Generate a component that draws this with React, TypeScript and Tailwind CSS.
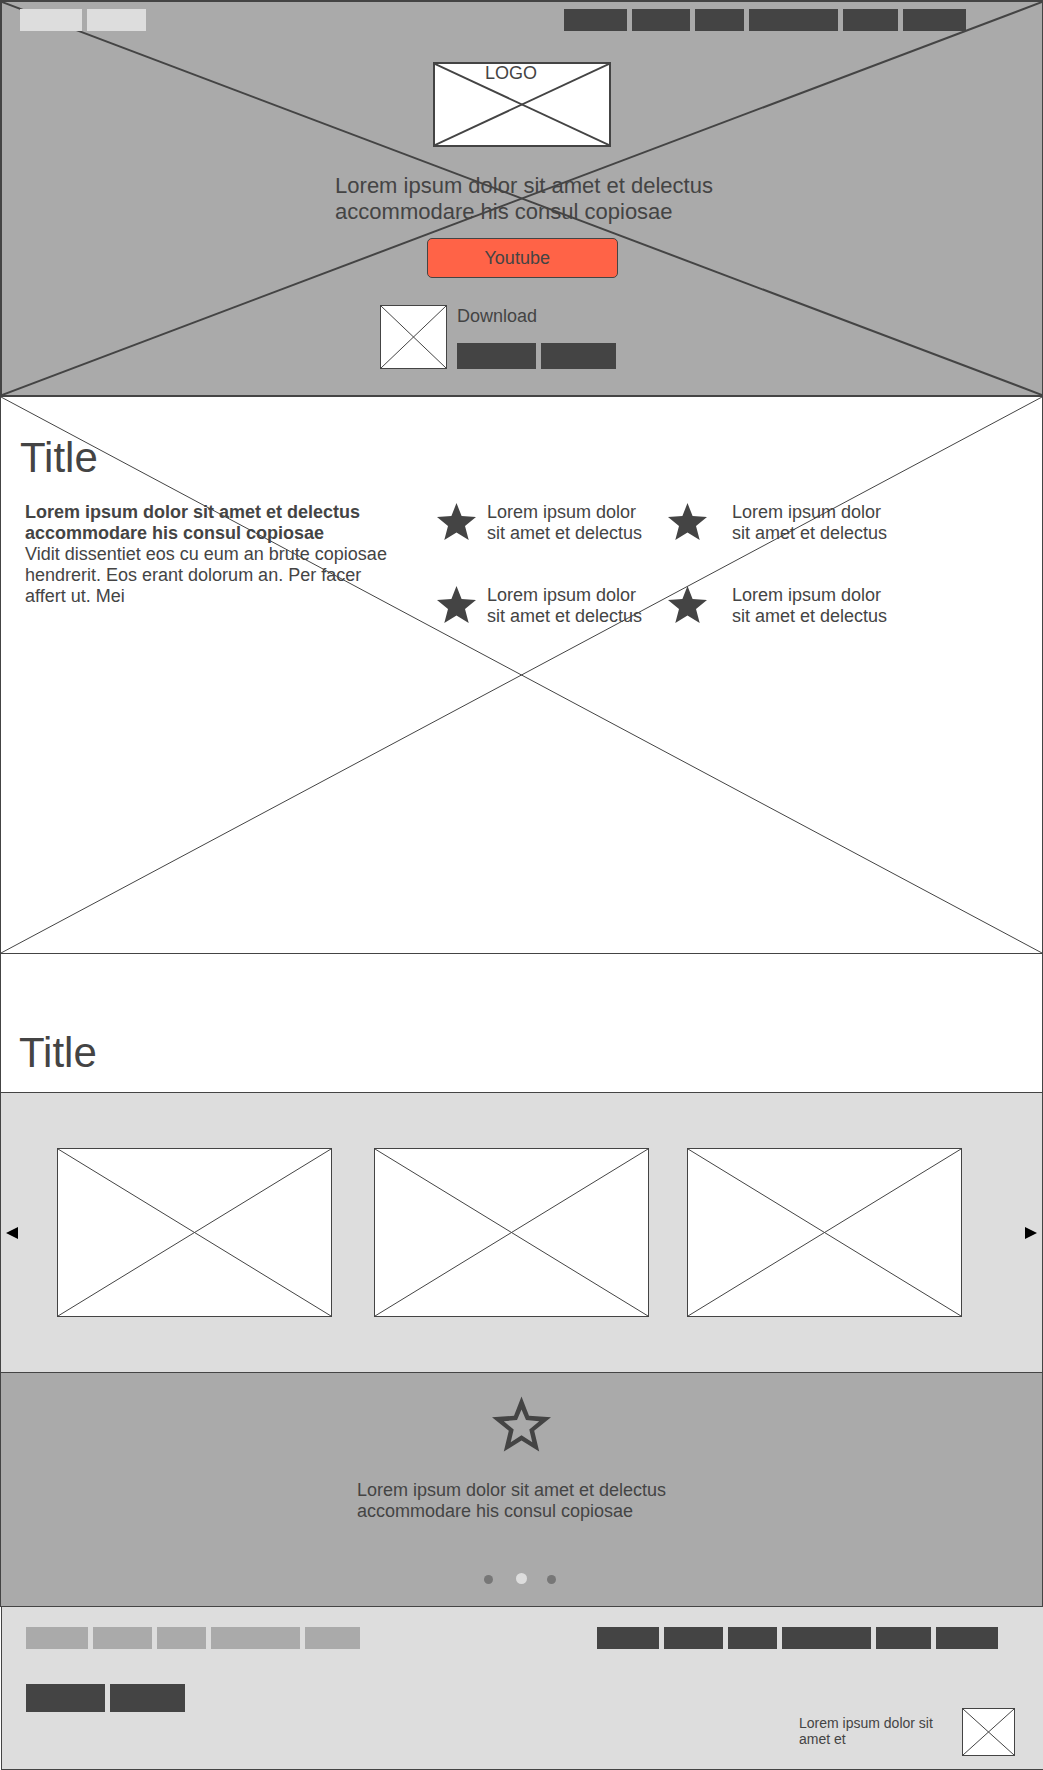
import React from "react";
import { clsx } from "clsx";

function Cross({ stroke = 1 }: { stroke?: number }) {
  return (
    <svg
      aria-hidden="true"
      className="pointer-events-none absolute inset-0 h-full w-full text-[#444]"
    >
      <line x1="0" y1="0" x2="100%" y2="100%" stroke="currentColor" strokeWidth={stroke} />
      <line x1="0" y1="100%" x2="100%" y2="0" stroke="currentColor" strokeWidth={stroke} />
    </svg>
  );
}

function Picture({ className }: { className: string }) {
  return (
    <div
      role="img"
      aria-label="Image placeholder"
      className={clsx("relative border border-[#444] bg-white", className)}
    >
      <Cross />
    </div>
  );
}

function Bars({ label, widths, tone }: { label: string; widths: string[]; tone: string }) {
  return (
    <nav aria-label={label} className="flex gap-[5px]">
      {widths.map((width, i) => (
        <a
          key={i}
          href="#"
          aria-label={`${label} ${i + 1}`}
          className={clsx("block", width, tone)}
        />
      ))}
    </nav>
  );
}

const LIGHT = "h-[22px] bg-[#ddd]";
const MID = "h-[22px] bg-[#aaa]";
const DARK = "h-[22px] bg-[#444]";

function Star() {
  return (
    <svg aria-hidden="true" viewBox="0 0 39 37" className="mt-px h-[37px] w-[39px] shrink-0">
      <polygon
        fill="#444"
        points="19.5,0 24.6,13.1 39,14 28,23 31.7,37 19.5,29.6 7.3,37 11,23 0,14 14.4,13.1"
      />
    </svg>
  );
}

function Feature({ gap }: { gap: string }) {
  return (
    <li className={clsx("flex", gap)}>
      <Star />
      <p className="whitespace-nowrap">
        Lorem ipsum dolor
        <br />
        sit amet et delectus
      </p>
    </li>
  );
}

export default function App() {
  return (
    <div className="bg-white font-['Liberation_Sans',Arial,sans-serif] text-[18px] leading-[21px] text-[#444]">
      <header className="relative border-2 border-r border-[#444] bg-[#aaa] pt-[7px] pb-[26px]">
        <Cross stroke={2} />
        <div className="relative flex justify-between pr-[76px] pl-[18px]">
          <Bars label="Language" widths={["w-[62px]", "w-[59px]"]} tone={LIGHT} />
          <Bars
            label="Menu"
            widths={["w-[63px]", "w-[58px]", "w-[49px]", "w-[89px]", "w-[55px]", "w-[63px]"]}
            tone={DARK}
          />
        </div>
        <div className="relative flex flex-col items-center">
          <div className="relative mt-[31px] h-[85px] w-[178px] border-2 border-[#444] bg-white pl-[50px] leading-[19px]">
            <Cross stroke={2} />
            <span className="relative">LOGO</span>
          </div>
          <p className="mt-[26px] pl-1 text-[22px] leading-[26px]">
            Lorem ipsum dolor sit amet et delectus
            <br />
            accommodare his consul copiosae
          </p>
          <button
            type="button"
            className="mt-[13px] h-10 w-[191px] rounded-[5px] border border-[#444] bg-[#ff6347] pl-[57px] text-left"
          >
            Youtube
          </button>
          <div className="mt-[27px] mr-12 flex gap-[10px]">
            <Picture className="h-16 w-[67px]" />
            <div className="flex flex-col justify-between pt-px">
              <p>Download</p>
              <Bars label="Download" widths={["w-[79px]", "w-[75px]"]} tone="h-[26px] bg-[#444]" />
            </div>
          </div>
        </div>
      </header>

      <section className="relative border-x border-b border-[#444] pt-[37px] pb-[326px]">
        <Cross />
        <h2 className="pl-[19px] text-[42px] leading-[48px]">Title</h2>
        <div className="mt-5 flex pl-6">
          <div className="w-[412px] shrink-0">
            <p className="font-bold">
              Lorem ipsum dolor sit amet et delectus
              <br />
              accommodare his consul copiosae
            </p>
            <p>
              Vidit dissentiet eos cu eum an brute copiosae
              <br />
              hendrerit. Eos erant dolorum an. Per facer
              <br />
              affert ut. Mei
            </p>
          </div>
          <ul className="grid grid-cols-[231px_auto] gap-y-[41px]">
            <Feature gap="gap-[11px]" />
            <Feature gap="gap-[25px]" />
            <Feature gap="gap-[11px]" />
            <Feature gap="gap-[25px]" />
          </ul>
        </div>
      </section>

      <section>
        <div className="border-x border-b border-[#444] pt-[75px] pb-[15px] pl-[18px]">
          <h2 className="text-[42px] leading-[48px]">Title</h2>
        </div>
        <div className="flex items-center border-x border-b border-[#444] bg-[#ddd] px-[5px] py-[55px]">
          <button type="button" aria-label="Previous" className="mr-[39px] shrink-0">
            <svg viewBox="0 0 12 12" className="block size-3">
              <polygon points="0,6 12,0 12,12" fill="#000" />
            </svg>
          </button>
          <Picture className="mr-[42px] h-[169px] flex-1" />
          <Picture className="mr-[38px] h-[169px] flex-1" />
          <Picture className="mr-[63px] h-[169px] flex-1" />
          <button type="button" aria-label="Next" className="shrink-0">
            <svg viewBox="0 0 12 12" className="block size-3">
              <polygon points="12,6 0,0 0,12" fill="#000" />
            </svg>
          </button>
        </div>
      </section>

      <section className="flex flex-col items-center border-x border-b border-[#444] bg-[#aaa] pt-6 pb-[22px]">
        <svg aria-hidden="true" viewBox="0 0 57 54" className="h-[54px] w-[57px] overflow-visible">
          <path
            fill="#444"
            fillRule="evenodd"
            d="M28.5 -0.5 36 18.8 58 20.2 41.2 33.7 46.2 54.5 28.5 43.5 10.8 54.5 15.8 33.7 -1 20.2 21 18.8ZM28.5 12.5 24 23 10.8 24.2 20.7 32.5 17.7 45.2 28.5 38.2 39.3 45.2 36.3 32.5 46.2 24.2 33 23Z"
          />
        </svg>
        <p className="mt-[29px] pr-5">
          Lorem ipsum dolor sit amet et delectus
          <br />
          accommodare his consul copiosae
        </p>
        <div className="mt-[51px] flex items-end pr-[3px]">
          <button
            type="button"
            aria-label="Slide 1"
            className="mr-[23px] size-[9px] rounded-full bg-[#777]"
          />
          <button
            type="button"
            aria-label="Slide 2"
            aria-current="true"
            className="mr-5 size-[11px] rounded-full bg-[#ddd]"
          />
          <button type="button" aria-label="Slide 3" className="size-[9px] rounded-full bg-[#777]" />
        </div>
      </section>

      <footer className="ml-px border-b border-l border-[#444] bg-[#ddd] pt-5 pb-[13px] pl-6">
        <div className="flex justify-between pr-[45px]">
          <Bars
            label="Links"
            widths={["w-[62px]", "w-[59px]", "w-[49px]", "w-[89px]", "w-[55px]"]}
            tone={MID}
          />
          <Bars
            label="Footer menu"
            widths={["w-[62px]", "w-[59px]", "w-[49px]", "w-[89px]", "w-[55px]", "w-[62px]"]}
            tone={DARK}
          />
        </div>
        <div className="mt-[35px] flex justify-between pr-7">
          <Bars label="Stores" widths={["w-[79px]", "w-[75px]"]} tone="h-7 bg-[#444]" />
          <div className="flex gap-6 pt-6">
            <p className="w-[139px] pt-[7px] text-[14px] leading-4">
              Lorem ipsum dolor sit
              <br />
              amet et
            </p>
            <Picture className="h-12 w-[53px]" />
          </div>
        </div>
      </footer>
    </div>
  );
}
